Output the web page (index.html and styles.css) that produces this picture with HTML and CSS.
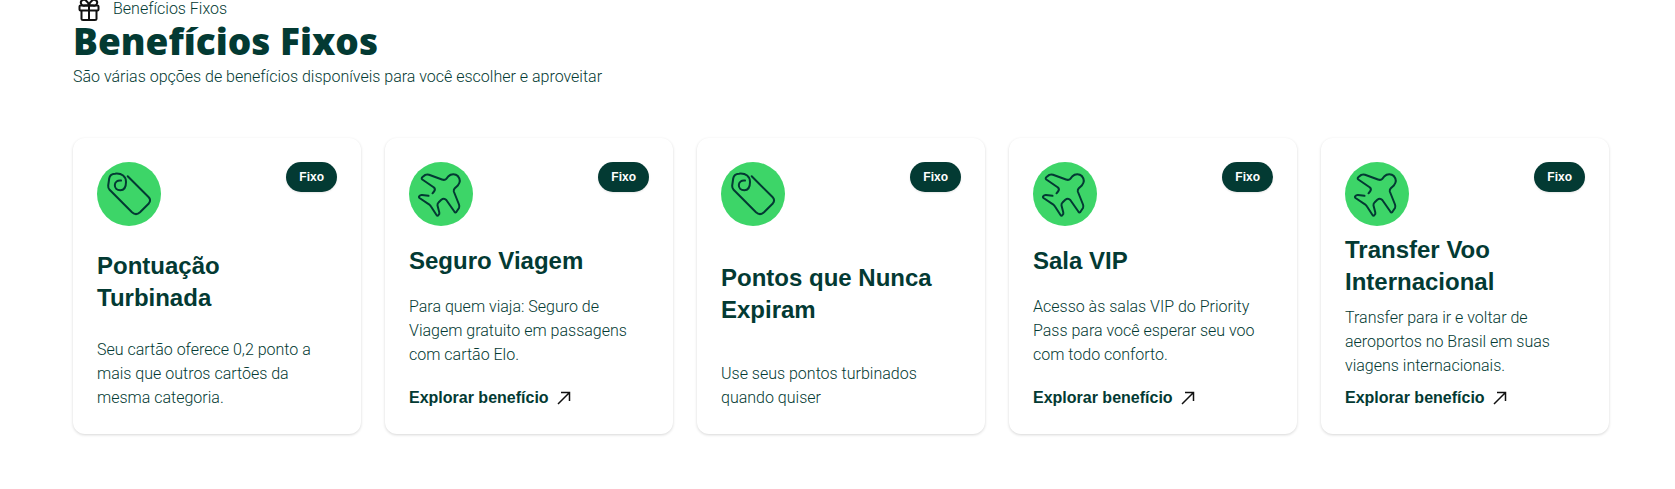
FILE: index.html
```html
<!DOCTYPE html>
<html lang="pt-BR">

<head>
    <meta charset="UTF-8">
    <meta name="viewport" content="width=device-width, initial-scale=1.0">
    <title>Benefícios Fixos</title>
    <link rel="stylesheet" href="styles.css">
</head>

<body>
    <!-- Shared icons -->
    <svg class="sprite" aria-hidden="true">
        <symbol id="icon-tag" viewBox="0 0 64 64">
            <path d="M30.7 14.3 51.5 35Q54.5 38 51.8 41.5L43 50.3Q39 54 35 50.3L12.6 27.8Q11 26.2 11.2 23.5L12.2 16.5Q13 12 18 11.7C25 11 29 14.5 29 20C29 25.500 27 28.300 23.300 28.300C19.800 28.300 17.800 26 17.800 23C17.800 20 20.500 18 24 18.500" />
        </symbol>
        <symbol id="icon-plane" viewBox="0 0 64 64">
            <path d="M23.500 31.300 25 29.500Q26.800 27.500 25 25.500L13.300 17.500Q12 16.300 13.500 15L16.300 12.900Q18 12.200 20 12.800L33 17.500Q35.800 18.500 37.300 16.800L39.500 14.200C42 11.500 46.500 11.500 48.800 14C51.300 17 51.300 20.500 48.800 23.500L45.800 26.300Q44.500 27.500 44.800 29.500L50 42.500Q50.700 44.300 50 46L47.300 50Q46.400 51 45.500 49.800L37.300 38Q35 35.500 32.300 37.800L29.500 40.500Q28.300 41.500 28.500 43.500L30.300 50.500Q30.700 52 29.500 53Q28.500 54.500 27.500 53L22 44.500Q21.300 43.300 20 42.300L10.500 36Q9.500 35.200 10.300 34.200Q11.300 32.800 13 33L19.500 33.800" />
        </symbol>
        <symbol id="icon-arrow" viewBox="0 0 24 24">
            <path d="M5 18 16 7M8 6.500H16.500V15" />
        </symbol>
    </svg>

    <main class="benefits">
        <header class="benefits-header">
            <div class="section-label">
                <svg class="gift-icon" viewBox="0 0 32 24" aria-hidden="true">
                    <rect x="6.500" y="8.500" width="19" height="5" rx="1" />
                    <path d="M8.500 13.500V22Q8.500 23 10 23H22Q23.500 23 23.500 22V13.500M16 8.500V23M16 8.500H12A3 3 0 1 1 13.500 4.200Q15.500 5.500 16 8.500Q16.500 5.500 18.500 4.200A3 3 0 1 1 20 8.500H16" />
                </svg>
                <span>Benefícios Fixos</span>
            </div>
            <h1>Benefícios Fixos</h1>
            <p>São várias opções de benefícios disponíveis para você escolher e aproveitar</p>
        </header>

        <section class="cards">
            <article class="card">
                <div class="card-top">
                    <svg class="card-icon"><use href="#icon-tag" /></svg>
                    <span class="badge">Fixo</span>
                </div>
                <h2>Pontuação Turbinada</h2>
                <p>Seu cartão oferece 0,2 ponto a mais que outros cartões da mesma categoria.</p>
            </article>

            <article class="card">
                <div class="card-top">
                    <svg class="card-icon"><use href="#icon-plane" /></svg>
                    <span class="badge">Fixo</span>
                </div>
                <h2>Seguro Viagem</h2>
                <p>Para quem viaja: Seguro de Viagem gratuito em passagens com cartão Elo.</p>
                <a href="#" class="card-link">Explorar benefício <svg class="arrow"><use href="#icon-arrow" /></svg></a>
            </article>

            <article class="card">
                <div class="card-top">
                    <svg class="card-icon"><use href="#icon-tag" /></svg>
                    <span class="badge">Fixo</span>
                </div>
                <h2>Pontos que Nunca Expiram</h2>
                <p>Use seus pontos turbinados quando quiser</p>
            </article>

            <article class="card">
                <div class="card-top">
                    <svg class="card-icon"><use href="#icon-plane" /></svg>
                    <span class="badge">Fixo</span>
                </div>
                <h2>Sala VIP</h2>
                <p>Acesso às salas VIP do Priority Pass para você esperar seu voo com todo conforto.</p>
                <a href="#" class="card-link">Explorar benefício <svg class="arrow"><use href="#icon-arrow" /></svg></a>
            </article>

            <article class="card">
                <div class="card-top">
                    <svg class="card-icon"><use href="#icon-plane" /></svg>
                    <span class="badge">Fixo</span>
                </div>
                <h2>Transfer Voo Internacional</h2>
                <p>Transfer para ir e voltar de aeroportos no Brasil em suas viagens internacionais.</p>
                <a href="#" class="card-link">Explorar benefício <svg class="arrow"><use href="#icon-arrow" /></svg></a>
            </article>
        </section>
    </main>
</body>

</html>
```
FILE: styles.css
```css
* {
    box-sizing: border-box;
}

body {
    margin: 0;
    background-color: #fff;
    color: #033a33;
    font-family: Roboto, sans-serif;
    font-size: 16px;
    font-weight: 300;
    line-height: 24px;
}

h1,
h2,
p {
    margin: 0;
}

.sprite {
    display: none;
}

.benefits {
    padding: 0 66px 32px 73px;
}

.benefits-header {
    margin-bottom: 49px;
}

.section-label {
    display: flex;
    align-items: center;
    gap: 8px;
    height: 17px;
}

.gift-icon {
    width: 32px;
    height: 24px;
    fill: none;
    stroke: #111;
    stroke-width: 2;
    stroke-linejoin: round;
}

.benefits-header h1 {
    font-family: "Open Sans", sans-serif;
    font-size: 37px;
    font-weight: 800;
    line-height: 48px;
}

.cards {
    display: grid;
    grid-template-columns: repeat(5, 1fr);
    gap: 24px;
}

.card {
    display: flex;
    flex-direction: column;
    justify-content: space-between;
    min-height: 296px;
    padding: 24px;
    border-radius: 12px;
    background: #fff;
    box-shadow: 0 1px 3px rgba(0, 0, 0, 0.16);
}

.card-top {
    display: flex;
    align-items: flex-start;
    justify-content: space-between;
}

.card-icon {
    width: 64px;
    height: 64px;
    border-radius: 50%;
    background: #3dd568;
    fill: none;
    stroke: #033a33;
    stroke-width: 2;
    stroke-linecap: round;
    stroke-linejoin: round;
}

.badge {
    padding: 0 13px;
    border-radius: 15px;
    background: #033a33;
    color: #fff;
    font-family: "Liberation Sans", Arial, sans-serif;
    font-size: 12px;
    font-weight: bold;
    line-height: 30px;
    box-shadow: 0 1px 2px rgba(0, 0, 0, 0.1);
}

.card h2 {
    font-family: "Liberation Sans", Arial, sans-serif;
    font-size: 24px;
    line-height: 32px;
}

.card-link {
    display: flex;
    align-items: center;
    gap: 4px;
    color: #033a33;
    font-family: "Liberation Sans", Arial, sans-serif;
    font-weight: bold;
    text-decoration: none;
}

.arrow {
    width: 24px;
    height: 24px;
    fill: none;
    stroke: #111;
    stroke-width: 1.5;
}
```
